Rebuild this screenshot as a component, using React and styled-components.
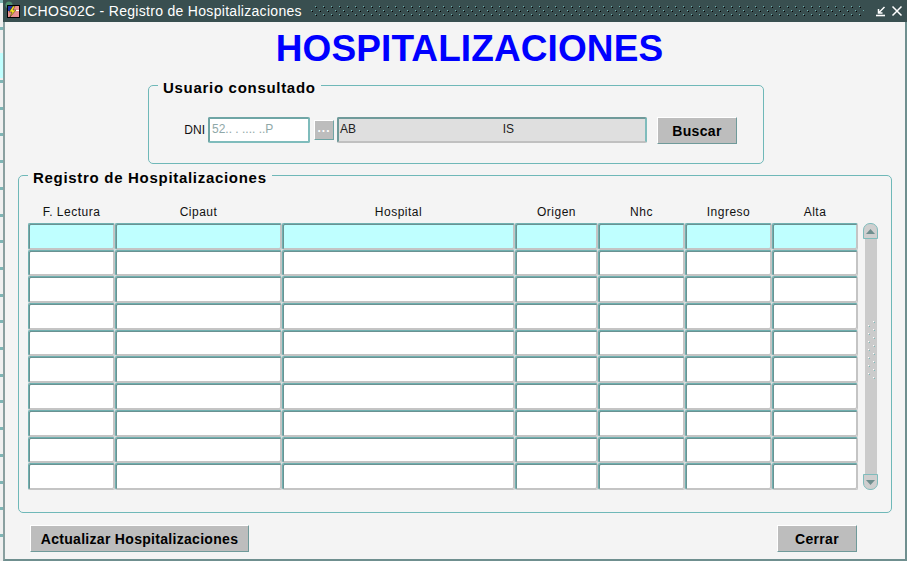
import React from 'react';
import styled, { createGlobalStyle } from 'styled-components';

const GlobalStyle = createGlobalStyle`
  html, body {
    margin: 0;
    padding: 0;
    background: #c0c0c0;
  }
`;

const Window = styled.div`
  width: 907px;
  height: 561px;
  box-sizing: border-box;
  display: flex;
  flex-direction: column;
  padding-left: 3px;
  overflow: hidden;
  background:
    linear-gradient(#bfffff, #bfffff) 0 53px / 3px 25px no-repeat,
    repeating-linear-gradient(to bottom, #7fb5b5 0 3px, #f0f0f0 3px 26.7px);
  font-family: "Liberation Sans", Arial, sans-serif;
  color: #000;
`;

const TitleBar = styled.div`
  height: 22px;
  flex: none;
  display: flex;
  align-items: center;
  background: #394f50;
  color: #fff;
  padding-left: 2px;
`;

const TitleText = styled.span`
  font-size: 14px;
  margin-left: 3px;
  letter-spacing: 0.3px;
  white-space: nowrap;
`;

const Grip = styled.svg`
  flex: 1;
  height: 22px;
  margin: 0 11px 0 9px;
`;

const WinButton = styled.svg`
  flex: none;
  width: 12px;
  height: 12px;
  margin-right: 4px;
`;

const IconBox = styled.svg`
  flex: none;
  align-self: flex-start;
  margin-top: 1px;
`;

const Body = styled.div`
  flex: 1;
  display: flex;
  flex-direction: column;
  background: #f4f4f4;
  border-left: 2px solid #8aa0a0;
  border-right: 2px solid #6f8f8f;
  border-bottom: 2px solid #6f8f8f;
`;

const Heading = styled.h1`
  margin: 6px 0 6px;
  padding-left: 29px;
  height: 41px;
  text-align: center;
  font-size: 37px;
  line-height: 41px;
  font-weight: 700;
  letter-spacing: 0.1px;
  color: #0000ff;
`;

const Group = styled.fieldset`
  box-sizing: border-box;
  min-width: 0;
  margin: ${(p) => p.$margin};
  padding: 0 0 0 ${(p) => p.$inset}px;
  width: ${(p) => p.$width};
  height: ${(p) => p.$height}px;
  border: 1px solid #6fb8b8;
  border-radius: 5px;
`;

const GroupTitle = styled.legend`
  margin-left: ${(p) => p.$indent}px;
  padding: 4px 5px 0;
  font-size: 15px;
  line-height: 17px;
  font-weight: 700;
  letter-spacing: 0.7px;
`;

const SearchRow = styled.div`
  display: flex;
  align-items: flex-start;
  padding-top: 21px;
`;

const FieldLabel = styled.label`
  width: 59px;
  padding-right: 3px;
  box-sizing: border-box;
  text-align: right;
  font-size: 12px;
  line-height: 26px;
  color: #111;
`;

const Input = styled.div`
  box-sizing: border-box;
  height: 26px;
  width: ${(p) => p.$width}px;
  margin-right: ${(p) => p.$gap}px;
  padding-left: ${(p) => (p.$readOnly ? 1 : 2)}px;
  font-size: 12px;
  line-height: 20px;
  white-space: pre;
  background: ${(p) => (p.$readOnly ? '#dfdfdf' : '#fff')};
  color: ${(p) => (p.$readOnly ? '#222' : '#8fa8a8')};
  border-style: solid;
  border-width: 2px;
  border-radius: 2px;
  border-color: ${(p) => (p.$readOnly ? '#6f9a9a #7fbcbc #c0c0c0 #6f9a9a' : '#6fa5a5 #7fbcbc #7fbcbc #6fa5a5')};
`;

const LovButton = styled.div`
  box-sizing: border-box;
  width: 20px;
  height: 20px;
  margin: 3px 3px 0 4px;
  background: #bdbdbd;
  border-bottom: 1px solid #6fa5a5;
  border-right: 1px solid #6fa5a5;
  border-top: 1px solid #fff;
  border-left: 1px solid #fff;
  color: #fff;
  font-size: 12px;
  font-weight: 700;
  line-height: 14px;
  letter-spacing: 1px;
  text-align: center;
`;

const Button = styled.button`
  box-sizing: border-box;
  flex: none;
  width: ${(p) => p.$width}px;
  height: 27px;
  padding: 0;
  background: #bdbdbd;
  border-style: solid;
  border-width: 1px;
  border-color: #fff #6f9a9a #6f9a9a #fff;
  font-family: inherit;
  font-size: 14px;
  font-weight: 700;
  letter-spacing: 0.3px;
  color: #000;
`;

const TableArea = styled.div`
  display: flex;
  align-items: flex-start;
  gap: 5px;
  padding-top: 19px;
`;

const Table = styled.div`
  display: grid;
  grid-template-columns: 87px 167px 233px 83px 87px 87px 86px;
  grid-template-rows: 18px;
  grid-auto-rows: 26.7px;
`;

const ColumnTitle = styled.div`
  font-size: 12px;
  line-height: 14px;
  letter-spacing: 0.5px;
  text-align: center;
  color: #111;
`;

const Cell = styled.div`
  box-sizing: border-box;
  background: ${(p) => (p.$current ? '#bfffff' : '#fff')};
  border-style: solid;
  border-width: 1px;
  border-radius: 2px;
  border-color: #6fb0b0 #c4c4c4 #c4c4c4 #6fb0b0;
  box-shadow: inset 1px 1px 0 #6a9292, inset -1px -1px 0 #c4c4c4;
`;

const Scrollbar = styled.div`
  width: 15px;
  height: 267px;
  margin-top: 18px;
  display: flex;
  flex-direction: column;
  align-items: center;
`;

const ScrollButton = styled.div`
  box-sizing: border-box;
  flex: none;
  width: 15px;
  height: 16px;
  display: flex;
  align-items: center;
  justify-content: center;
  background: #cfcfcf;
  border: 1px solid #7fbcbc;
  border-radius: ${(p) => (p.$down ? '0 0 7px 7px' : '7px 7px 0 0')};
`;

const ScrollTrack = styled.div`
  flex: 1;
  width: 12px;
  display: flex;
  align-items: center;
  justify-content: center;
  background: #cbcbcb;
`;

const ThumbGrip = styled.svg`
  margin-bottom: 13px;
`;

const Footer = styled.div`
  display: flex;
  justify-content: space-between;
  padding: 12px 48px 0 25px;
`;

const COLUMNS = ['F. Lectura', 'Cipaut', 'Hospital', 'Origen', 'Nhc', 'Ingreso', 'Alta'];
const ROWS = Array.from({ length: 10 }, (_, i) => i);

const AppIcon = () => (
  <IconBox width="15" height="17" viewBox="0 0 15 17">
    <circle cx="4" cy="4" r="3.5" fill="#4f8f6f" />
    <rect x="2.5" y="4.5" width="12" height="12" fill="#fff" stroke="#000" />
    <rect x="3" y="5" width="5" height="5" fill="#1f2fa0" />
    <path d="M8 6h6M8 8h6M3 11h11M3 13h11M3 15h11" stroke="#d02020" />
    <path d="M8 5L4 11h3l-2 5 6-7H8l2-4z" fill="#f4e020" stroke="#000" strokeWidth="0.4" />
  </IconBox>
);

const Dots = ({ id, light, dark, w, h, x, y }) => (
  <pattern id={id} x={x} y={y} width={w} height={h} patternUnits="userSpaceOnUse">
    <rect x="0" y="0" width="1" height="1" fill={light} />
    <rect x="1" y="1" width="1" height="1" fill={dark} />
    <rect x={w / 2} y={h / 2} width="1" height="1" fill={light} />
    <rect x={w / 2 + 1} y={h / 2 + 1} width="1" height="1" fill={dark} />
  </pattern>
);

const App = () => (
  <>
    <GlobalStyle />
    <Window>
      <TitleBar>
        <AppIcon />
        <TitleText>ICHOS02C - Registro de Hospitalizaciones</TitleText>
        <Grip>
          <defs>
            <Dots id="titleDots" light="#6fb0b0" dark="#000" w={8} h={8} x={0} y={2} />
          </defs>
          <rect x="0" y="5" width="100%" height="12" fill="url(#titleDots)" />
        </Grip>
        <WinButton viewBox="0 0 12 12">
          <path d="M9.5 2L4 7.5M3.5 4v4h4" stroke="#fff" strokeWidth="1.5" fill="none" />
          <path d="M1 10.5h9" stroke="#fff" strokeWidth="1.6" />
        </WinButton>
        <WinButton viewBox="0 0 12 12">
          <path d="M1.5 1.5l9 9M10.5 1.5l-9 9" stroke="#fff" strokeWidth="1.5" />
        </WinButton>
      </TitleBar>
      <Body>
        <Heading>HOSPITALIZACIONES</Heading>
        <Group $margin="0 0 0 143px" $inset={0} $height={89} $width="616px">
          <GroupTitle $indent={9}>Usuario consultado</GroupTitle>
          <SearchRow>
            <FieldLabel>DNI</FieldLabel>
            <Input $width={102} $gap={0}>52.. . .... ..P</Input>
            <LovButton>...</LovButton>
            <Input $width={310} $gap={10} $readOnly>{'AB                                            IS'}</Input>
            <Button $width={80}>Buscar</Button>
          </SearchRow>
        </Group>
        <Group $margin="1px 13px 0 13px" $inset={9} $height={348} $width="auto">
          <GroupTitle $indent={0}>Registro de Hospitalizaciones</GroupTitle>
          <TableArea>
            <Table>
              {COLUMNS.map((c) => (
                <ColumnTitle key={c}>{c}</ColumnTitle>
              ))}
              {ROWS.map((r) =>
                COLUMNS.map((c) => <Cell key={c + r} $current={r === 0} />)
              )}
            </Table>
            <Scrollbar>
              <ScrollButton>
                <svg width="9" height="5" viewBox="0 0 9 5"><path d="M4.5 0L9 5H0z" fill="#6f8f8f" /></svg>
              </ScrollButton>
              <ScrollTrack>
                <ThumbGrip width="8" height="58">
                  <defs>
                    <Dots id="thumbDots" light="#fff" dark="#7fbcbc" w={10} h={8} x={6} y={0} />
                  </defs>
                  <rect x="0" y="0" width="8" height="58" fill="url(#thumbDots)" />
                </ThumbGrip>
              </ScrollTrack>
              <ScrollButton $down>
                <svg width="9" height="5" viewBox="0 0 9 5"><path d="M0 0h9L4.5 5z" fill="#6f8f8f" /></svg>
              </ScrollButton>
            </Scrollbar>
          </TableArea>
        </Group>
        <Footer>
          <Button $width={219}>Actualizar Hospitalizaciones</Button>
          <Button $width={80}>Cerrar</Button>
        </Footer>
      </Body>
    </Window>
  </>
);

export default App;
